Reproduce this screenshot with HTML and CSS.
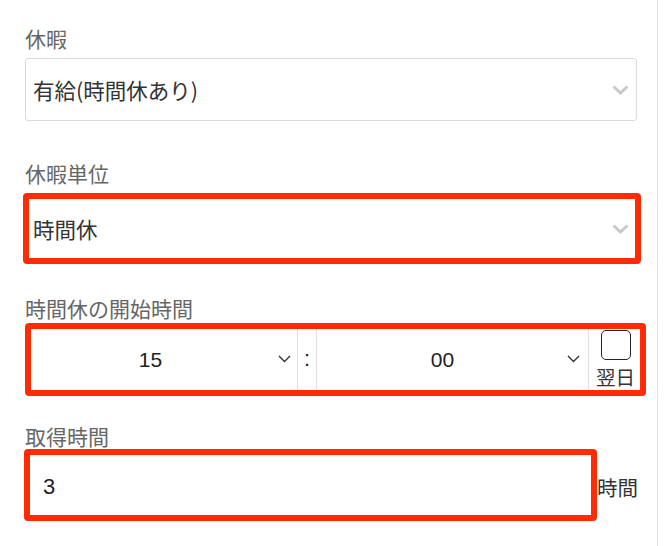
FILE: index.html
```html
<!DOCTYPE html>
<html lang="ja">
<head>
<meta charset="utf-8">
<title>休暇</title>
<link rel="stylesheet" href="styles.css">
</head>
<body>
<div class="page">
  <div class="field f1">
    <div class="label">休暇</div>
    <div class="select plain">
      <span class="value">有給(時間休あり)</span>
      <svg class="chev-big" width="17" height="10" viewBox="0 0 17 10"><path d="M1.5 1.5 L8.5 8 L15.5 1.5" fill="none" stroke="#c9c9c9" stroke-width="3"/></svg>
    </div>
  </div>

  <div class="field f2">
    <div class="label">休暇単位</div>
    <div class="hl hl2">
      <div class="select inner2">
        <span class="value">時間休</span>
        <svg class="chev-big" width="17" height="10" viewBox="0 0 17 10"><path d="M1.5 1.5 L8.5 8 L15.5 1.5" fill="none" stroke="#c9c9c9" stroke-width="3"/></svg>
      </div>
    </div>
  </div>

  <div class="field f3">
    <div class="label">時間休の開始時間</div>
    <div class="hl hl3">
      <div class="time-sel hour">
        <span class="num">15</span>
        <svg class="chev-small" width="13" height="8" viewBox="0 0 13 8"><path d="M1 1 L6.5 6.5 L12 1" fill="none" stroke="#333" stroke-width="1.4"/></svg>
      </div>
      <div class="colon">:</div>
      <div class="time-sel minute">
        <span class="num">00</span>
        <svg class="chev-small" width="13" height="8" viewBox="0 0 13 8"><path d="M1 1 L6.5 6.5 L12 1" fill="none" stroke="#333" stroke-width="1.4"/></svg>
      </div>
      <div class="nextday">
        <span class="checkbox"></span>
        <span class="nd-text">翌日</span>
      </div>
    </div>
  </div>

  <div class="field f4">
    <div class="label">取得時間</div>
    <div class="row4">
      <div class="hl hl4">
        <span class="num3">3</span>
      </div>
      <span class="unit">時間</span>
    </div>
  </div>
</div>
</body>
</html>
```

FILE: styles.css
```css
* { box-sizing: border-box; }
html, body { margin: 0; padding: 0; background: #fff; }
body {
  font-family: "Noto Sans CJK JP", "Noto Sans", sans-serif;
  color: #333;
}
.page {
  width: 658px;
  height: 546px;
  border-right: 1px solid #e6e6e6;
  padding: 26px 0 0 25px;
  overflow: hidden;
}
.label {
  font-size: 21px;
  line-height: 24px;
  height: 24px;
  color: #666;
}
.f2 { margin-top: 40px; }
.f3 { margin-top: 32px; }
.f4 { margin-top: 28px; }

.select {
  display: flex;
  align-items: center;
  justify-content: space-between;
  background: #fff;
}
.value {
  font-size: 21.5px;
  line-height: 28px;
  color: #333;
}
.plain {
  margin-top: 8px;
  width: 612px;
  height: 63px;
  border: 1px solid #dcdcdc;
  border-radius: 3px;
  padding: 0 7px 0 7px;
}
.hl {
  border: 6px solid #fe2b04;
  border-radius: 4px;
  background: #fff;
}
.hl2 {
  margin-top: 8px;
  margin-left: -2px;
  width: 618px;
  height: 71px;
}
.inner2 {
  height: 100%;
  padding: 0 6px 0 4px;
}
.hl3 {
  margin-top: 3px;
  width: 621px;
  height: 73px;
  display: flex;
}
.time-sel {
  position: relative;
  display: flex;
  align-items: center;
  justify-content: center;
  height: 100%;
}
.hour { width: 266px; padding-right: 27px; }
.minute { width: 271px; padding-right: 20px; }
.num {
  font-family: "Liberation Sans", Arial, sans-serif;
  font-size: 21px;
  color: #222;
}
.chev-small {
  position: absolute;
  top: 26px;
  right: 6px;
}
.minute .chev-small { right: 8px; }
.colon {
  width: 20px;
  height: 100%;
  border-left: 1px solid #dedede;
  border-right: 1px solid #dedede;
  display: flex;
  align-items: center;
  justify-content: center;
  font-family: "Liberation Sans", Arial, sans-serif;
  font-size: 22px;
  color: #222;
  padding-bottom: 2px;
}
.nextday {
  flex: 1;
  border-left: 1px solid #dedede;
  display: flex;
  flex-direction: column;
  align-items: center;
  padding: 1px 0 0 2px;
}
.checkbox {
  width: 30px;
  height: 30px;
  border: 1.5px solid #222;
  border-radius: 5px;
  display: block;
}
.nd-text {
  margin-top: 6px;
  font-size: 19.5px;
  line-height: 22px;
  color: #333;
}
.row4 {
  margin-top: 1px;
  margin-left: -1px;
  display: flex;
  align-items: center;
}
.hl4 {
  width: 573px;
  height: 72px;
  display: flex;
  align-items: center;
  padding-left: 13px;
  padding-top: 3px;
}
.num3 {
  font-family: "Liberation Sans", Arial, sans-serif;
  font-size: 22px;
  color: #222;
}
.unit {
  font-size: 20.5px;
  line-height: 24px;
  color: #333;
  margin-left: 0;
  padding-top: 4px;
}
```
